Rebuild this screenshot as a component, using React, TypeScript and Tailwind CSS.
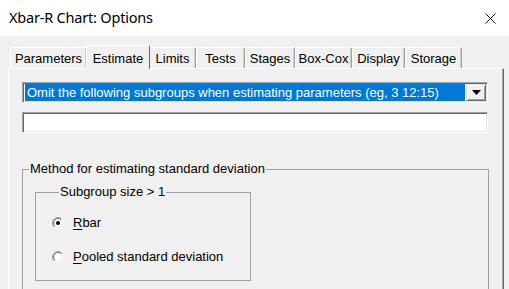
import React from 'react'

const tabs = [
  { label: 'Parameters', w: 'w-[77px]' },
  { label: 'Estimate', w: 'w-[64px]', active: true },
  { label: 'Limits', w: 'w-[47px]' },
  { label: 'Tests', w: 'w-[49px]' },
  { label: 'Stages', w: 'w-[50px]' },
  { label: 'Box-Cox', w: 'w-[57px]' },
  { label: 'Display', w: 'w-[53px]' },
  { label: 'Storage', w: 'w-[57px]' },
]

// classic sunken 3D radio button
function Radio({ checked }: { checked?: boolean }) {
  return (
    <svg width="12" height="12" viewBox="0 0 12 12" className="shrink-0">
      <defs>
        <linearGradient id="rOuter" x1="0" y1="0" x2="1" y2="1">
          <stop offset="45%" stopColor="#a0a0a0" />
          <stop offset="55%" stopColor="#ffffff" />
        </linearGradient>
        <linearGradient id="rInner" x1="0" y1="0" x2="1" y2="1">
          <stop offset="45%" stopColor="#696969" />
          <stop offset="55%" stopColor="#e3e3e3" />
        </linearGradient>
      </defs>
      <circle cx="6" cy="6" r="5.5" fill="none" stroke="url(#rOuter)" strokeWidth="1" />
      <circle cx="6" cy="6" r="4.5" fill="#ffffff" stroke="url(#rInner)" strokeWidth="1" />
      {checked && <circle cx="6" cy="6" r="2" fill="#000000" />}
    </svg>
  )
}

export default function App() {
  return (
    <div className="h-[289px] w-[509px] overflow-hidden flex flex-col bg-[#f0f0f0] text-black font-['Liberation_Sans',Arial,sans-serif] text-[13px]">
      {/* Title bar */}
      <div className="h-[36px] shrink-0 bg-white flex items-center justify-between pl-[9px] pr-[13px]">
        <span className="text-[14.5px] font-['Noto_Sans','Liberation_Sans',sans-serif] tracking-[-0.2px]">
          Xbar-R Chart: Options
        </span>
        <svg width="11" height="11" viewBox="0 0 11 11">
          <path d="M0.5 0.5 L10.5 10.5 M10.5 0.5 L0.5 10.5" stroke="#111" strokeWidth="1" />
        </svg>
      </div>

      {/* Tab strip */}
      <div className="mt-[9px] h-[23px] shrink-0 flex items-end pl-[10px]">
        {tabs.map((t) =>
          t.active ? (
            <div
              key={t.label}
              className={`${t.w} relative z-10 -mb-[1px] h-[24px] -mx-[1px] flex items-start justify-center pt-[3px] bg-[#f0f0f0] border-t border-l border-white border-r border-r-[#696969] rounded-t-[2px]`}
            >
              {t.label}
            </div>
          ) : (
            <div
              key={t.label}
              className={`${t.w} h-[21px] flex items-center justify-center pt-[1px] bg-[#f0f0f0] border-t border-l border-white border-r border-r-[#a0a0a0] shadow-[inset_-1px_0_0_#d0d0d0] rounded-t-[2px]`}
            >
              {t.label}
            </div>
          )
        )}
      </div>

      {/* Tab panel */}
      <div className="flex-1 ml-[8px] w-[496px] border-t border-l border-white border-r border-r-[#696969] shadow-[inset_-1px_0_0_#a0a0a0] pl-[13px] pt-[13px]">
        {/* Combo box */}
        <div className="w-[466px] h-[21px] flex border border-t-[#a0a0a0] border-l-[#a0a0a0] border-b-white border-r-white shadow-[inset_1px_1px_0_#696969,inset_-1px_-1px_0_#e3e3e3] p-[1px] bg-white">
          <div className="flex-1 ml-[1px] bg-[#0078d7] text-white flex items-center pl-[2px] leading-none">
            Omit the following subgroups when estimating parameters (eg, 3 12:15)
          </div>
          <div className="w-[20px] ml-[1px] flex items-center justify-center bg-[#f0f0f0] border border-t-[#e3e3e3] border-l-[#e3e3e3] border-b-[#696969] border-r-[#696969] shadow-[inset_1px_1px_0_#fff,inset_-1px_-1px_0_#a0a0a0]">
            <svg width="9" height="5" viewBox="0 0 9 5">
              <path d="M0 0 H9 L4.5 5 Z" fill="#000" />
            </svg>
          </div>
        </div>

        {/* Text box */}
        <div className="mt-[9px] w-[466px] h-[21px] bg-white border border-t-[#a0a0a0] border-l-[#a0a0a0] border-b-white border-r-white shadow-[inset_1px_1px_0_#696969,inset_-1px_-1px_0_#e3e3e3]" />

        {/* Method group */}
        <fieldset className="mt-[28px] w-[467px] border border-[#a0a0a0] pb-[30px]">
          <legend className="ml-[6px] px-[1px] leading-[16px]">
            Method for estimating standard deviation
          </legend>
          <fieldset className="mt-[7px] ml-[12px] w-[216px] border border-[#a0a0a0] pl-[16px] pt-[13px] pb-[13px]">
            <legend className="ml-[7px] px-[1px] leading-[16px]">Subgroup size &gt; 1</legend>
            <div className="flex flex-col gap-[14px]">
              <label className="h-[20px] flex items-center gap-[9px]">
                <Radio checked />
                <span>
                  <u className="underline-offset-2">R</u>bar
                </span>
              </label>
              <label className="h-[20px] flex items-center gap-[9px]">
                <Radio />
                <span>
                  <u className="underline-offset-2">P</u>ooled standard deviation
                </span>
              </label>
            </div>
          </fieldset>
        </fieldset>
      </div>
    </div>
  )
}
